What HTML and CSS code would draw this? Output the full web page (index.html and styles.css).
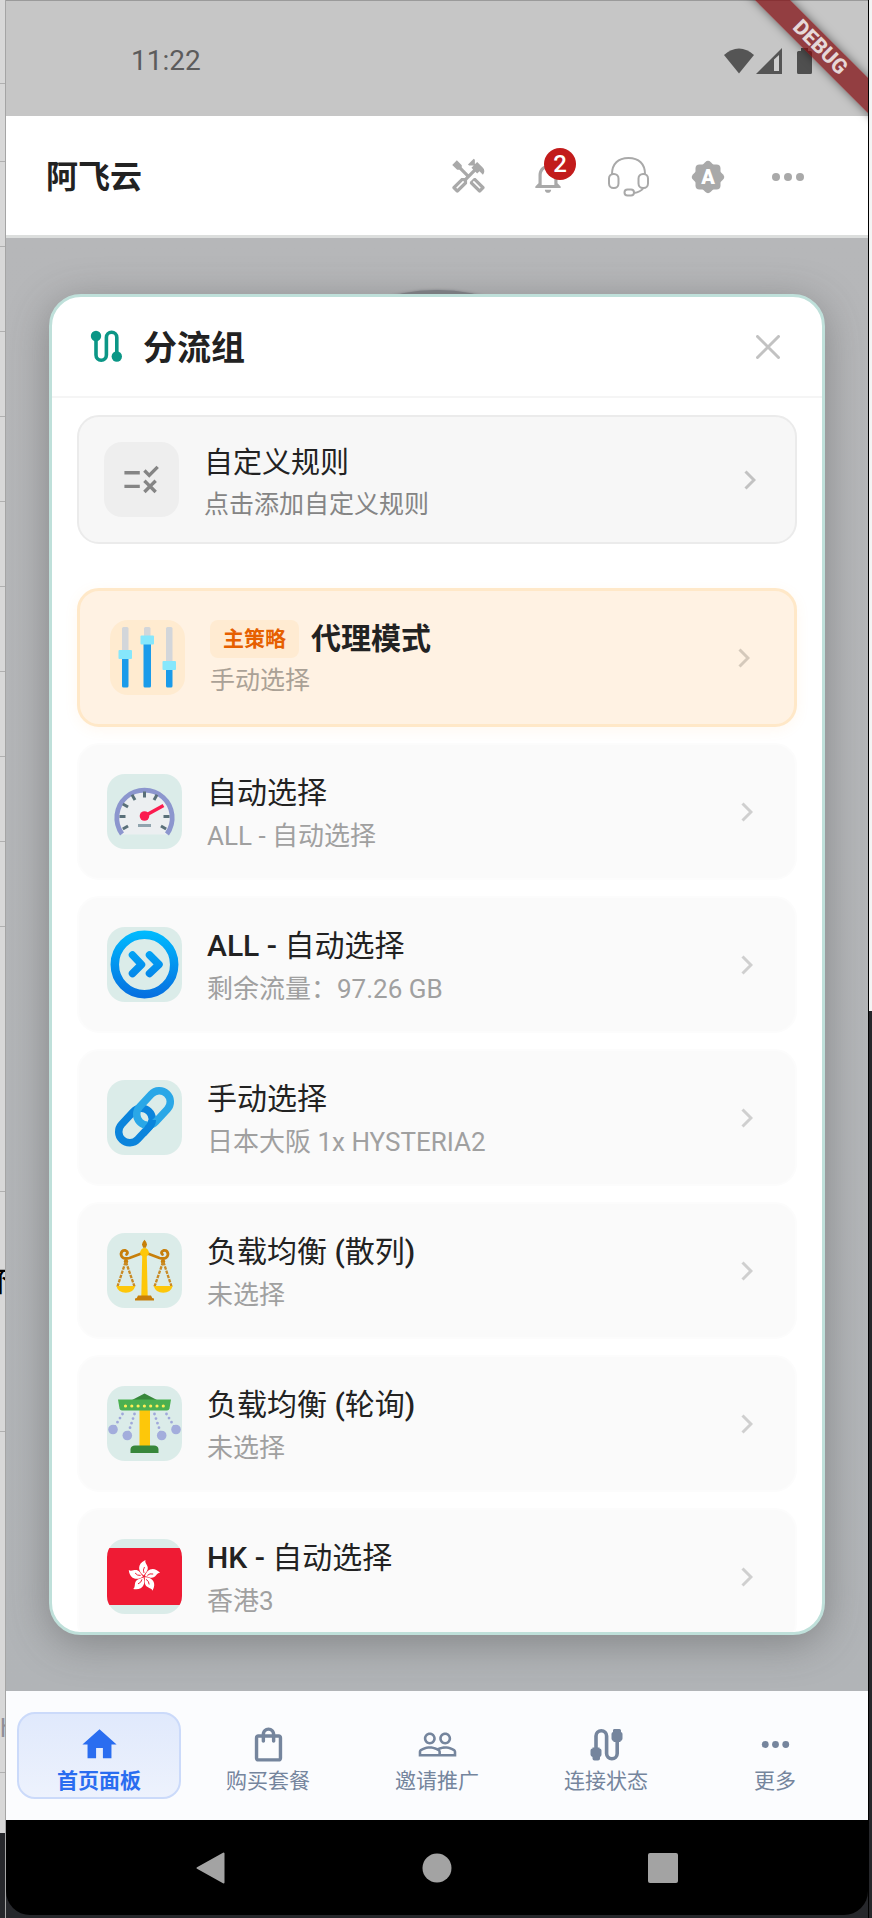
FILE: index.html
```html
<!DOCTYPE html>
<html lang="zh-CN">
<head>
<meta charset="utf-8">
<meta name="viewport" content="width=device-width, initial-scale=1">
<title>阿飞云</title>
<link rel="stylesheet" href="styles.css">
</head>
<body>
<svg width="0" height="0" class="defs" aria-hidden="true">
  <symbol id="chevron" viewBox="0 0 12 20"><path d="M1.500 1.500 10 10l-8.500 8.500" fill="none" stroke="currentColor" stroke-width="3"/></symbol>
</svg>
<div class="desktop">
  <div class="edge edge-left" aria-hidden="true">
    <i class="cell first"></i><i class="cell second"></i>
    <i class="cell"></i><i class="cell"></i><i class="cell"></i><i class="cell"></i><i class="cell"></i><i class="cell"></i><i class="cell"></i><i class="cell"></i><i class="cell"></i>
    <i class="cell tall"></i>
    <span class="cell word">不</span>
    <span class="cell latin">h</span>
    <i class="cell last"></i>
    <i class="dark"></i>
  </div>

  <div class="phone">
    <header class="status">
      <span class="time">11:22</span>
      <span class="signals">
        <svg width="30" height="26" viewBox="0 0 30 26"><path d="M0 7Q7 .5 15 .5T30 7L15 25.500Z" fill="#555"/></svg>
        <svg width="27" height="26" viewBox="0 0 27 26"><path d="M0 26 26 0v26Z" fill="#555"/><path d="M18 11.500l5-4.500v16h-5Z" fill="#d0d0d0"/></svg>
        <svg class="battery" width="15" height="26" viewBox="0 0 15 26"><path d="M4 0h7v3h2.500a1.500 1.500 0 0 1 1.500 1.500v20a1.500 1.500 0 0 1-1.500 1.500h-12A1.500 1.500 0 0 1 0 24.500v-20A1.500 1.500 0 0 1 1.500 3H4Z" fill="#4f4f4f"/></svg>
      </span>
    </header>

    <div class="appbar">
      <h1>阿飞云</h1>
      <div class="tools">
        <button class="tool" aria-label="工具"><svg width="39" height="39" viewBox="0 0 24 24" fill="currentColor"><path d="M21.670 18.170l-5.300-5.300h-.99l-2.540 2.540v.99l5.300 5.300c.39.39 1.020.39 1.410 0l2.120-2.120c.39-.38.39-1.020 0-1.410zm-2.830 1.420l-4.240-4.240.71-.71 4.240 4.240-.71.71z"/><path d="M17.340 10.190l1.410-1.410 2.120 2.120c1.170-1.170 1.170-3.070 0-4.240l-3.540-3.540-1.410 1.410V1.710L15.220 1l-3.540 3.540.71.71h2.830l-1.410 1.410 1.060 1.060-2.890 2.890-4.130-4.130V5.060L4.830 2.040 2 4.870 5.030 7.900h1.410l4.130 4.130-.85.85H7.600l-5.300 5.300c-.39.39-.39 1.020 0 1.410l2.120 2.120c.39.39 1.020.39 1.410 0l5.300-5.300v-2.120l5.150-5.150 1.060 1.050zm-7.980 5.150l-4.240 4.240-.71-.71 4.240-4.240.71.71z"/></svg></button>
        <button class="tool" aria-label="通知"><svg width="38" height="38" viewBox="0 0 24 24" fill="currentColor"><path d="M12 22c1.100 0 2-.9 2-2h-4c0 1.100.89 2 2 2zm6-6v-5c0-3.070-1.640-5.640-4.500-6.320V4c0-.83-.67-1.500-1.500-1.500s-1.500.67-1.500 1.500v.68C7.630 5.360 6 7.920 6 11v5l-2 2v1h16v-1l-2-2zm-2 1H8v-6c0-2.480 1.510-4.500 4-4.500s4 2.020 4 4.500v6z"/></svg><span class="count">2</span></button>
        <button class="tool" aria-label="客服"><svg width="43" height="41" viewBox="0 0 43 41" fill="none" stroke="currentColor" stroke-width="2"><rect x="2" y="18" width="9.500" height="14" rx="4.500"/><rect x="31.500" y="18" width="9.500" height="14" rx="4.500"/><path d="M5 18C5 8 11 2 21.500 2S38 8 38 18M36.500 32q-3 4-9.500 5"/><rect x="17.500" y="33.500" width="9.500" height="6" rx="3"/></svg></button>
        <button class="tool" aria-label="自动"><svg width="36" height="36" viewBox="0 0 36 36"><g fill="currentColor"><rect x="5.500" y="5.500" width="25" height="25" rx="4"/><rect x="5.500" y="5.500" width="25" height="25" rx="4" transform="rotate(45 18 18)"/></g><text x="18" y="25" text-anchor="middle" class="auto">A</text></svg></button>
        <button class="tool" aria-label="更多选项"><svg width="32" height="8" viewBox="0 0 32 8" fill="currentColor"><circle cx="4" cy="4" r="4"/><circle cx="16" cy="4" r="4"/><circle cx="28" cy="4" r="4"/></svg></button>
      </div>
    </div>

    <main class="stage">
      <section class="dialog" role="dialog" aria-labelledby="dlg-title">
        <header class="dialog-head">
          <svg width="33" height="33" viewBox="0 0 33 33"><g fill="none" stroke="#0b9686" stroke-width="3.600"><path d="M6 6v19a5.200 5.200 0 0 0 10.400 0V7.500a5.200 5.200 0 0 1 10.400 0V26"/></g><g fill="#0b9686"><circle cx="6" cy="6" r="5.200"/><circle cx="26.800" cy="26.500" r="5.200"/></g></svg>
          <h2 id="dlg-title">分流组</h2>
          <button class="close" aria-label="关闭"><svg width="24" height="24" viewBox="0 0 24 24"><path d="M1.500 1.500l21 21M22.500 1.500l-21 21" stroke="#c2c2c2" stroke-width="3" stroke-linecap="round"/></svg></button>
        </header>

        <div class="list">
          <button class="row custom">
            <span class="tile"><svg width="41" height="41" viewBox="0 0 24 24" fill="#858585"><path d="M16.540 11L13 7.460l1.410-1.410 2.120 2.120 4.240-4.240 1.410 1.410L16.540 11zM11 7H2v2h9V7zm10 6.410L19.590 12 17 14.590 14.410 12 13 13.410 15.590 16 13 18.590 14.410 20 17 17.410 19.590 20 21 18.590 18.410 16 21 13.410zM11 15H2v2h9v-2z"/></svg></span>
            <span class="text"><span class="name">自定义规则</span><span class="sub">点击添加自定义规则</span></span>
            <svg class="go" width="12" height="20"><use href="#chevron"/></svg>
          </button>

          <button class="row main">
            <span class="tile"><svg width="75" height="75" viewBox="0 0 75 75"><g fill="#d3d6da"><rect x="12" y="7" width="6.500" height="30" rx="1.500"/><rect x="34" y="7" width="6.500" height="20" rx="1.500"/><rect x="56" y="7" width="6.500" height="40" rx="1.500"/></g><g fill="#1b9bea"><rect x="12" y="35" width="6.500" height="32.500" rx="1.500"/><rect x="33.500" y="22" width="7.500" height="45.500" rx="1.500"/><rect x="56" y="46" width="6.500" height="21.500" rx="1.500"/></g><g fill="#86e7fc"><rect x="8.500" y="30" width="13.500" height="9" rx="1"/><rect x="30.500" y="15.500" width="13.500" height="9" rx="1"/><rect x="52.500" y="41" width="13.500" height="9" rx="1"/></g></svg></span>
            <span class="text"><span class="name"><span class="tag">主策略</span>代理模式</span><span class="sub">手动选择</span></span>
            <svg class="go" width="12" height="20"><use href="#chevron"/></svg>
          </button>

          <button class="row">
            <span class="tile"><svg width="75" height="75" viewBox="0 0 75 75"><path d="M15 60.500A27.700 27.700 0 1 1 60 60.500Z" fill="#eceff1"/><path d="M15 60A27.700 27.700 0 1 1 60 60" fill="none" stroke="#8c96ce" stroke-width="4.800"/><g stroke="#5a7079" stroke-width="3"><path id="tk" d="M12.500 42.500h6"/><use href="#tk" transform="rotate(30 37.500 42.500)"/><use href="#tk" transform="rotate(60 37.500 42.500)"/><use href="#tk" transform="rotate(90 37.500 42.500)"/><use href="#tk" transform="rotate(120 37.500 42.500)"/><use href="#tk" transform="rotate(180 37.500 42.500)"/><use href="#tk" transform="rotate(210 37.500 42.500)"/><use href="#tk" transform="rotate(-30 37.500 42.500)"/></g><path d="M31 51.500h13" stroke="#90a4ae" stroke-width="3"/><path d="M37.500 42 56.500 31.500" stroke="#fb1b4f" stroke-width="3.500"/><circle cx="37.500" cy="42" r="4.800" fill="#fb1b4f"/></svg></span>
            <span class="text"><span class="name">自动选择</span><span class="sub">ALL - 自动选择</span></span>
            <svg class="go" width="12" height="20"><use href="#chevron"/></svg>
          </button>

          <button class="row">
            <span class="tile"><svg width="75" height="75" viewBox="0 0 75 75"><defs><linearGradient id="blue" gradientUnits="userSpaceOnUse" x1="0" y1="3" x2="0" y2="72"><stop stop-color="#00bcff"/><stop offset="1" stop-color="#066ddf"/></linearGradient></defs><g fill="none" stroke="url(#blue)"><circle cx="37.500" cy="37.500" r="29.700" stroke-width="8.500"/><path d="M25.500 28l9 9.500-9 9M42.500 28l9.500 9.500-9.500 9" stroke-width="7.500" stroke-linecap="round" stroke-linejoin="round"/></g></svg></span>
            <span class="text"><span class="name"><span><span class="latin-part">ALL - </span>自动选择</span></span><span class="sub">剩余流量：97.26 GB</span></span>
            <svg class="go" width="12" height="20"><use href="#chevron"/></svg>
          </button>

          <button class="row">
            <span class="tile"><svg width="75" height="75" viewBox="0 0 75 75" fill="none" stroke-width="7.500"><clipPath id="cross"><path d="M40 40H56V56H34Z"/></clipPath><rect id="lnk" x="9" y="34.500" width="39" height="22" rx="11" transform="rotate(-47 28.500 45.500)" stroke="#0b84dc"/><rect x="27" y="17" width="39" height="22" rx="11" transform="rotate(-47 46.500 28)" stroke="#2aa7e7"/><g clip-path="url(#cross)"><use href="#lnk"/></g></svg></span>
            <span class="text"><span class="name">手动选择</span><span class="sub">日本大阪 1x HYSTERIA2</span></span>
            <svg class="go" width="12" height="20"><use href="#chevron"/></svg>
          </button>

          <button class="row">
            <span class="tile"><svg width="75" height="75" viewBox="0 0 75 75"><g id="pan"><path d="M37 19.500 22.500 25q-8 2-8.500-4 .5-4 4.500-3.500 3.500 1.500 1 4" fill="none" stroke="#c77f0b" stroke-width="2.800" stroke-linecap="round"/><circle cx="19" cy="28.500" r="2.200" fill="#c77f0b"/><path d="M18.500 29 10.500 53.500M19 29l8.500 24.500" stroke="#c98a24" stroke-width="2.300" stroke-dasharray="3.500 1"/><path d="M9.300 53h19q-2 6.800-9.500 6.800T9.300 53Z" fill="#fdc70a"/></g><use href="#pan" transform="matrix(-1 0 0 1 75 0)"/><path d="M35.300 20h4.400l1 43h-6.400Z" fill="#fdc70a"/><circle cx="37.500" cy="19.500" r="4.400" fill="#fdc70a"/><path d="M37.500 6.800q2.800 3 2.500 5l-1.200 3h-2.600L35 11.800q-.3-2 2.500-5ZM31 62.500h13q.5 2.500 3 3v2H28v-2q2.500-.5 3-3Z" fill="#c77f0b"/></svg></span>
            <span class="text"><span class="name"><span>负载均衡 <span class="latin-part">(</span>散列<span class="latin-part">)</span></span></span><span class="sub">未选择</span></span>
            <svg class="go" width="12" height="20"><use href="#chevron"/></svg>
          </button>

          <button class="row">
            <span class="tile"><svg width="75" height="75" viewBox="0 0 75 75"><path d="M32.500 24H43v37H32.500Z" fill="#fdc70a"/><path d="M25 14 37.500 7.500 50 14ZM23.500 67v-4q.5-3.500 4.500-3.500h19q4 0 4.500 3.500v4Z" fill="#37873b"/><path d="M11 13.500h53l-1.500 9q-.5 2-2.500 2H15q-2 0-2.500-2Z" fill="#4bb050"/><path d="M18.500 20h39" stroke="#ffee58" stroke-width="3.200" stroke-linecap="round" stroke-dasharray="0 6.300"/><g id="sw"><path d="M15.500 28 6 43.500M27.500 28l-7 21.500" stroke="#9fa8da" stroke-width="2.800" stroke-linecap="round" stroke-dasharray="0 4.800"/><circle cx="6" cy="43.500" r="4.800" fill="#a3addc"/><circle cx="20.300" cy="49.500" r="4.800" fill="#a3addc"/></g><use href="#sw" transform="matrix(-1 0 0 1 75 0)"/></svg></span>
            <span class="text"><span class="name"><span>负载均衡 <span class="latin-part">(</span>轮询<span class="latin-part">)</span></span></span><span class="sub">未选择</span></span>
            <svg class="go" width="12" height="20"><use href="#chevron"/></svg>
          </button>

          <button class="row">
            <span class="tile"><svg width="75" height="75" viewBox="0 0 75 75"><rect y="9" width="75" height="57" rx="2" fill="#ef1b34"/><g><g id="ptl"><path d="M37 36.500C31 33 29.500 25 38.500 21c-1.500 3.500 4.500 6 1.500 11-1 1.800-2.500 2.500-3 4.500Z" fill="#fff"/><path d="M37 34q-1.500-3 .5-6" fill="none" stroke="#ef1b34" stroke-width=".9"/></g><use href="#ptl" transform="rotate(72 37 37.500)"/><use href="#ptl" transform="rotate(144 37 37.500)"/><use href="#ptl" transform="rotate(216 37 37.500)"/><use href="#ptl" transform="rotate(288 37 37.500)"/></g></svg></span>
            <span class="text"><span class="name"><span><span class="latin-part">HK - </span>自动选择</span></span><span class="sub">香港3</span></span>
            <svg class="go" width="12" height="20"><use href="#chevron"/></svg>
          </button>
        </div>
      </section>
    </main>

    <nav class="tabs">
      <a href="#home" class="tab active" aria-current="page"><svg width="41" height="41" viewBox="0 0 24 24" fill="currentColor"><path d="M10 20v-6h4v6h5v-8h3L12 3 2 12h3v8z"/></svg>首页面板</a>
      <a href="#shop" class="tab"><svg width="41" height="41" viewBox="0 0 24 24" fill="currentColor"><path d="M18 6h-2c0-2.210-1.790-4-4-4S8 3.790 8 6H6c-1.100 0-2 .9-2 2v12c0 1.100.9 2 2 2h12c1.100 0 2-.9 2-2V8c0-1.100-.9-2-2-2zm-6-2c1.100 0 2 .9 2 2h-4c0-1.100.9-2 2-2zm6 16H6V8h2v2c0 .55.45 1 1 1s1-.45 1-1V8h4v2c0 .55.45 1 1 1s1-.45 1-1V8h2v12z"/></svg>购买套餐</a>
      <a href="#invite" class="tab"><svg width="41" height="41" viewBox="0 0 24 24" fill="currentColor"><path d="M16.500 13c-1.200 0-3.070.34-4.500 1-1.430-.67-3.300-1-4.500-1C5.330 13 1 14.080 1 16.250V19h22v-2.750c0-2.170-4.330-3.250-6.500-3.250zm-4 4.500h-10v-1.250c0-.54 2.560-1.750 5-1.750s5 1.210 5 1.750v1.250zm9 0H14v-1.250c0-.46-.2-.86-.52-1.220.88-.3 1.960-.53 3.020-.53 2.440 0 5 1.210 5 1.750v1.250zM7.500 12c1.930 0 3.500-1.570 3.500-3.500S9.430 5 7.500 5 4 6.570 4 8.500 5.570 12 7.500 12zm0-5.500c1.100 0 2 .9 2 2s-.9 2-2 2-2-.9-2-2 .9-2 2-2zm9 5.500c1.930 0 3.500-1.570 3.500-3.500S18.430 5 16.500 5 13 6.570 13 8.500s1.570 3.500 3.500 3.500zm0-5.500c1.100 0 2 .9 2 2s-.9 2-2 2-2-.9-2-2 .9-2 2-2z"/></svg>邀请推广</a>
      <a href="#status" class="tab"><svg width="41" height="41" viewBox="-4.500 -4.500 41 41"><path d="M5.500 20V7.500a5.300 5.300 0 0 1 10.600 0V25a5.300 5.300 0 0 0 10.600 0V12" fill="none" stroke="currentColor" stroke-width="3.600"/><path d="M2 19h7v1q2 0 2 2v4q0 1.500-1.500 2.500V30q0 2-2 2H4q-2 0-2-2v-1.500Q0 27.500 0 26v-4q0-2 2-2ZM23.500.5h5.500q1.500 0 1.500 1.500v1.500q1.500.5 1.500 2V10q0 2-2 2.500v1h-7v-1q-2-.5-2-2.500V5.500q0-1.500 1.500-2V2q0-1.500 1-1.500Z" fill="currentColor"/></svg>连接状态</a>
      <a href="#more" class="tab"><svg width="41" height="41" viewBox="0 0 24 24" fill="currentColor"><circle cx="6" cy="12" r="2"/><circle cx="12" cy="12" r="2"/><circle cx="18" cy="12" r="2"/></svg>更多</a>
    </nav>

    <div class="sysnav">
      <button aria-label="返回"><svg width="30" height="32" viewBox="0 0 30 32"><path d="M27.500 1.500v29L1.500 16Z" fill="#a3a3a3" stroke="#a3a3a3" stroke-width="2" stroke-linejoin="round"/></svg></button>
      <button aria-label="主屏幕"><svg width="30" height="30" viewBox="0 0 30 30"><circle cx="15" cy="15" r="14.500" fill="#a3a3a3"/></svg></button>
      <button aria-label="最近任务"><svg width="30" height="30" viewBox="0 0 30 30"><rect width="30" height="30" rx="2" fill="#a3a3a3"/></svg></button>
    </div>
    <div class="debug"><span>DEBUG</span></div>
  </div>

  <div class="edge edge-right" aria-hidden="true"></div>
</div>
</body>
</html>
```
FILE: styles.css
```css
* { box-sizing: border-box; }

body {
  margin: 0;
  background: #26272b;
  color: #222;
  font-family: Roboto, "Noto Sans CJK SC", sans-serif;
}

h1, h2 { margin: 0; font-weight: 700; }

button {
  margin: 0;
  padding: 0;
  border: 0;
  background: none;
  color: inherit;
  font: inherit;
  text-align: left;
}

svg { display: block; flex: none; }
.defs { position: absolute; }

.desktop {
  display: grid;
  grid-template-columns: 6px minmax(0, 1fr) 4px;
  height: 100vh;
}

/* Windows that show behind the emulator */
.edge { overflow: hidden; }
.edge-left {
  display: flex;
  flex-direction: column;
  background: #d8d8d8;
  border-right: 1px solid #a5a5a5;
}
.cell { flex: none; height: 85px; border-bottom: 1px solid #b0b0b0; }
.cell.first { height: 84px; }
.cell.second { height: 78px; }
.cell.tall { height: 265px; }
.cell.word {
  display: flex;
  align-items: center;
  justify-content: center;
  height: 240px;
  padding: 0 4px 64px 0;
  color: #000;
  font-size: 28px;
}
.cell.latin {
  height: 341px;
  padding-top: 280px;
  color: #8f8f98;
  font-size: 26px;
  line-height: 32px;
}
.cell.last { height: 60px; border: 0; }
.dark { flex: 1; background: #26272b; }
.edge-right {
  border-left: 1px solid #000;
  background: linear-gradient(#f4f4f4 0 1011px, #26272b 1011px);
}

.phone {
  position: relative;
  display: flex;
  flex-direction: column;
  min-height: 0;
  margin-bottom: 3px;
  overflow: hidden;
  border-radius: 0 0 24px 24px;
  background: #000;
}

.status {
  display: flex;
  align-items: center;
  justify-content: space-between;
  height: 116px;
  padding: 4px 56px 0 125px;
  border-top: 1px solid #9a9a9a;
  background: #c6c6c6;
}
.time { color: #5c5c5c; font-size: 28px; }
.signals { display: flex; gap: 2px; }
.battery { margin-left: 12px; }

.debug {
  position: absolute;
  top: 0;
  right: 0;
  width: 130px;
  height: 130px;
  overflow: hidden;
}
.debug span {
  position: absolute;
  top: 35px;
  right: -52px;
  width: 200px;
  transform: rotate(45deg);
  background: rgba(128, 10, 14, .72);
  box-shadow: 0 0 10px rgba(0, 0, 0, .5);
  color: #e6d8d8;
  font-size: 21px;
  font-weight: 800;
  line-height: 25px;
  text-align: center;
}

.appbar {
  display: flex;
  align-items: center;
  justify-content: space-between;
  height: 122px;
  padding: 2px 40px 0;
  border-bottom: 3px solid #dcdedd;
  background: #fff;
}
.appbar h1 { font-size: 32px; line-height: 48px; }
.tools { display: flex; color: #a9a9a9; }
.tool {
  position: relative;
  display: grid;
  place-items: center;
  width: 80px;
  height: 80px;
}
.count {
  position: absolute;
  top: 11px;
  left: 36px;
  width: 32px;
  height: 32px;
  border-radius: 50%;
  background: #c21b1b;
  color: #fff;
  font-size: 24px;
  font-weight: 500;
  line-height: 32px;
  text-align: center;
}
.auto { fill: #fff; font-size: 20px; font-weight: 900; }

.stage {
  position: relative;
  display: flex;
  flex: 1;
  min-height: 0;
  padding: 56px 43px;
  background: linear-gradient(#b6b7b9, #b1b4b7);
}
/* Connect button of the home page, mostly hidden by the dialog */
.stage::before {
  content: "";
  position: absolute;
  top: 52px;
  left: calc(50% - 175px);
  width: 350px;
  height: 350px;
  border-radius: 50%;
  background: #85878c;
  box-shadow: 0 0 3px #85878c;
}
.dialog {
  position: relative;
  display: flex;
  flex: 1;
  flex-direction: column;
  min-width: 0;
  overflow: hidden;
  border: 3px solid #bfe0da;
  border-radius: 32px;
  background: #fff;
  box-shadow: 0 8px 42px rgba(60, 60, 60, .4);
}
.dialog-head {
  display: flex;
  flex: none;
  align-items: center;
  gap: 20px;
  height: 101px;
  padding: 0 40px 0 38px;
  border-bottom: 2px solid #f5f5f5;
}
.dialog-head h2 { flex: 1; padding-top: 2px; font-size: 34px; line-height: 50px; }
.dialog-head .close { padding: 2px; }

.list {
  display: flex;
  flex: 1;
  flex-direction: column;
  gap: 16px;
  min-height: 0;
  overflow: hidden;
  padding: 17px 25px 0;
}
.row {
  display: flex;
  flex: none;
  align-items: center;
  gap: 25px;
  height: 137px;
  padding: 0 42px 0 28px;
  border: 2px solid #fcfcfc;
  border-radius: 22px;
  background: #fafafa;
}
.row.custom {
  height: 129px;
  margin-bottom: 28px;
  padding: 0 39px 0 25px;
  border-color: #ebebeb;
  background: #f7f7f7;
}
.row.main {
  height: 139px;
  padding: 0 44px 0 30px;
  border: 3px solid #ffe8c8;
  background: #fff2e3;
  box-shadow: 0 3px 14px rgba(255, 170, 60, .08);
}
.tile {
  display: grid;
  flex: none;
  place-items: center;
  width: 75px;
  height: 75px;
  overflow: hidden;
  border-radius: 18px;
  background: #dbece9;
}
.custom .tile { background: #eee; }
.main .tile { background: #ffebd0; }
.text { display: flex; flex: 1; flex-direction: column; min-width: 0; padding-top: 4px; }
.custom .text { padding-top: 8px; }
.name {
  display: flex;
  align-items: center;
  gap: 12px;
  font-size: 30px;
  line-height: 44px;
}
.latin-part { font-weight: 500; }
.sub { color: #a0a0a0; font-size: 26px; line-height: 42px; }
.custom .name, .custom .sub { line-height: 42px; }
.custom .name { font-size: 29px; }
.custom .sub { color: #858585; font-size: 25px; }
.main .name { font-weight: 700; line-height: 42px; }
.main .sub { color: #aaa196; font-size: 25px; }
.tag {
  padding: 0 13px;
  border-radius: 8px;
  background: #ffebd2;
  color: #e66000;
  font-size: 21px;
  line-height: 38px;
}
.go { color: #cfcfcf; }
.custom .go { color: #c2c2c2; }
.main .go { color: #d5c9bb; }

.tabs {
  display: grid;
  grid-template-columns: repeat(5, minmax(0, 1fr));
  gap: 5px;
  height: 129px;
  padding: 21px 11px;
  background: #fbfcfe;
}
.tab {
  display: flex;
  flex-direction: column;
  align-items: center;
  padding-top: 10px;
  border: 2px solid transparent;
  border-radius: 18px;
  color: #75859d;
  font-size: 21px;
  line-height: 32px;
  text-decoration: none;
}
.tab.active {
  border-color: #cbdafa;
  background: linear-gradient(#e0e9fc, #edf2fd);
  color: #2a6df0;
  font-weight: 700;
}

.sysnav {
  display: flex;
  justify-content: center;
  height: 95px;
}
.sysnav button {
  display: grid;
  place-items: center;
  width: 226px;
}
```
